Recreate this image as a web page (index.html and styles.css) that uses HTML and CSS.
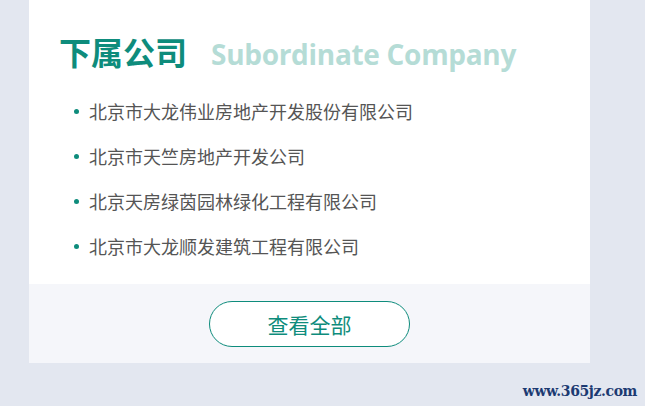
FILE: index.html
```html
<!DOCTYPE html>
<html lang="zh-CN">
<head>
    <meta charset="UTF-8">
    <title>下属公司</title>
    <link rel="stylesheet" href="styles.css">
</head>
<body>
    <div class="card">
        <div class="card-body">
            <h2 class="title">下属公司<span class="title-en">Subordinate Company</span></h2>
            <ul class="company-list">
                <li>北京市大龙伟业房地产开发股份有限公司</li>
                <li>北京市天竺房地产开发公司</li>
                <li>北京天房绿茵园林绿化工程有限公司</li>
                <li>北京市大龙顺发建筑工程有限公司</li>
            </ul>
        </div>
        <div class="card-foot">
            <a class="more-btn" href="#">查看全部</a>
        </div>
    </div>

    <div class="watermark">www.365jz.com</div>
</body>
</html>
```

FILE: styles.css
```css
body {
    margin: 0;
    padding: 0;
    background-color: #e3e7f0;
    font-family: "Noto Sans CJK SC", "Noto Sans", sans-serif;
    height: 406px;
    position: relative;
    overflow: hidden;
}

.card {
    margin-left: 29px;
    width: 561px;
    background-color: #ffffff;
}

.card-body {
    padding: 28px 30px 15px 30px;
}

.title {
    margin: 0;
    font-size: 32px;
    font-weight: bold;
    color: #0e8c7c;
    line-height: 46px;
    display: flex;
    align-items: baseline;
}

.title-en {
    margin-left: 24px;
    font-family: "Open Sans", sans-serif;
    font-size: 28px;
    font-weight: bold;
    color: #b5dcd6;
    letter-spacing: -0.3px;
}

.company-list {
    margin: 12px 0 0 0;
    padding: 0 0 0 30px;
    list-style: none;
}

.company-list li {
    position: relative;
    font-size: 18px;
    color: #555555;
    line-height: 45px;
}

.company-list li::before {
    content: "";
    position: absolute;
    left: -15px;
    top: 20px;
    width: 5px;
    height: 5px;
    border-radius: 50%;
    background-color: #0e8c7c;
}

.card-foot {
    background-color: #f5f6fa;
    height: 79px;
    display: flex;
    justify-content: center;
    align-items: center;
}

.more-btn {
    display: flex;
    align-items: center;
    justify-content: center;
    width: 199px;
    height: 44px;
    border: 1px solid #0e8c7c;
    border-radius: 23px;
    background-color: #ffffff;
    color: #0e8c7c;
    font-size: 21px;
    text-decoration: none;
}

.watermark {
    position: absolute;
    right: 8px;
    bottom: 7px;
    font-family: "DejaVu Serif", serif;
    font-size: 14px;
    font-weight: bold;
    letter-spacing: -0.4px;
    color: #1c3a72;
}
```
